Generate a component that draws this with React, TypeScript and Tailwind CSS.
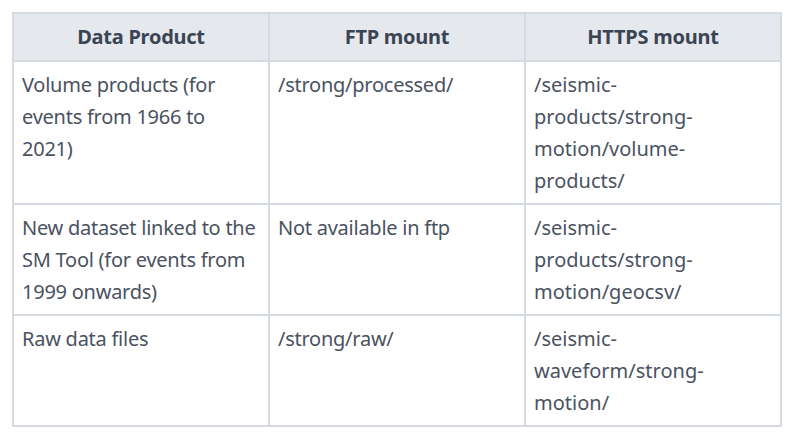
const rows = [
  {
    product: 'Volume products (for events from 1966 to 2021)',
    ftp: '/strong/processed/',
    https: '/seismic-products/strong-motion/volume-products/',
  },
  {
    product: 'New dataset linked to the SM Tool (for events from 1999 onwards)',
    ftp: 'Not available in ftp',
    https: '/seismic-products/strong-motion/geocsv/',
  },
  {
    product: 'Raw data files',
    ftp: '/strong/raw/',
    https: '/seismic-waveform/strong-motion/',
  },
];

export default function App() {
  return (
    <div className="w-[794px] h-[434px] bg-white pt-[12px] pl-[12px] font-['Noto_Sans','Open_Sans',sans-serif]">
      <table className="w-[770px] table-fixed border-collapse text-[20px] leading-[32px] text-[#4a5261]">
        <thead>
          <tr className="bg-[#e5e9ed] h-[48px]">
            {['Data Product', 'FTP mount', 'HTTPS mount'].map((h) => (
              <th
                key={h}
                className="border-2 border-[#d5dbe1] px-[8px] font-bold tracking-[-0.25px] text-[#3b4454] text-center"
              >
                {h}
              </th>
            ))}
          </tr>
        </thead>
        <tbody>
          {rows.map((r) => (
            <tr key={r.product}>
              <td className="border-2 border-[#d5dbe1] align-top px-[8px] pt-[7px] pb-[6px] tracking-[-0.25px]">{r.product}</td>
              <td className="border-2 border-[#d5dbe1] align-top px-[8px] pt-[7px] pb-[6px] tracking-[-0.25px]">{r.ftp}</td>
              <td className="border-2 border-[#d5dbe1] align-top pl-[8px] pr-[14px] pt-[7px] pb-[6px]">{r.https}</td>
            </tr>
          ))}
        </tbody>
      </table>
    </div>
  );
}
